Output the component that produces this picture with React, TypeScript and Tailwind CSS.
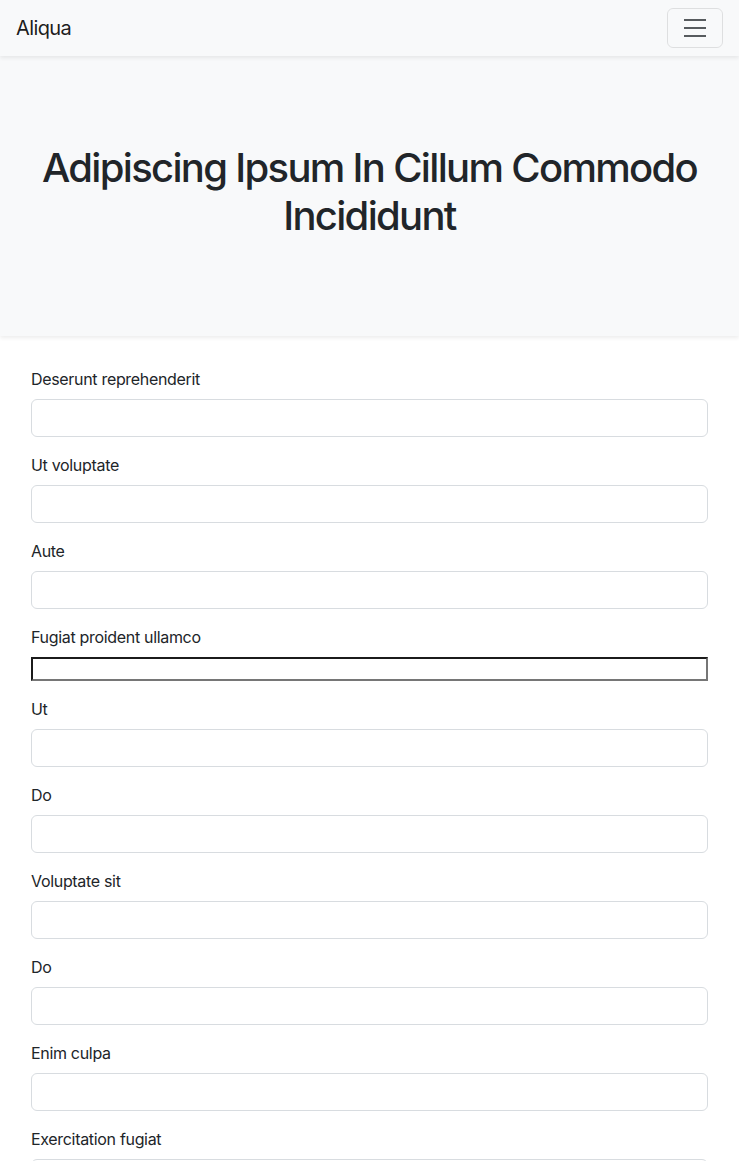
import React from "react";

const fields = [
  "Deserunt reprehenderit",
  "Ut voluptate",
  "Aute",
  "Fugiat proident ullamco",
  "Ut",
  "Do",
  "Voluptate sit",
  "Do",
  "Enim culpa",
  "Exercitation fugiat",
  "Labore",
];

function Field({ label, plain }: { label: string; plain?: boolean }) {
  return (
    <div className="mb-4">
      <label className="block mb-2 text-base leading-6 tracking-[-0.02em] text-[#212529]">{label}</label>
      {plain ? (
        <input
          type="text"
          className="block w-full h-6 bg-white border-2 border-t-[#1b1b1b] border-l-[#1b1b1b] border-b-[#767676] border-r-[#767676] outline-none"
        />
      ) : (
        <input
          type="text"
          className="block w-full h-[38px] px-3 bg-white border border-[#d8dce0] rounded-[6px] text-base outline-none"
        />
      )}
    </div>
  );
}

export default function App() {
  return (
    <div className="min-h-screen bg-white text-[#212529] font-['Inter','Liberation_Sans',sans-serif]">
      <nav className="relative z-10 h-14 flex items-center justify-between px-4 bg-[#f8f9fa] shadow-[0_0.125rem_0.25rem_rgba(0,0,0,0.075)]">
        <a className="text-xl leading-[30px] tracking-[-0.03em] text-black/90">Aliqua</a>
        <button className="w-14 h-10 flex items-center justify-center border border-black/10 rounded-[6px]">
          <svg width="30" height="30" viewBox="0 0 30 30">
            <path
              d="M4 7h22M4 15h22M4 23h22"
              stroke="rgba(33,37,41,0.75)"
              strokeWidth="2"
              strokeLinecap="butt"
            />
          </svg>
        </button>
      </nav>

      <header className="bg-[#f8f9fa] py-[88px] px-4 text-center shadow-[0_0.125rem_0.25rem_rgba(0,0,0,0.075)]">
        <h1 className="mb-2 text-[40px] leading-[48px] font-medium tracking-[-0.042em] text-[#212529]">
          Adipiscing Ipsum In Cillum Commodo Incididunt
        </h1>
      </header>

      <form className="px-[31px] pt-[31px] pb-8">
        {fields.map((f, i) => (
          <Field key={i} label={f} plain={i === 3} />
        ))}
      </form>
    </div>
  );
}
